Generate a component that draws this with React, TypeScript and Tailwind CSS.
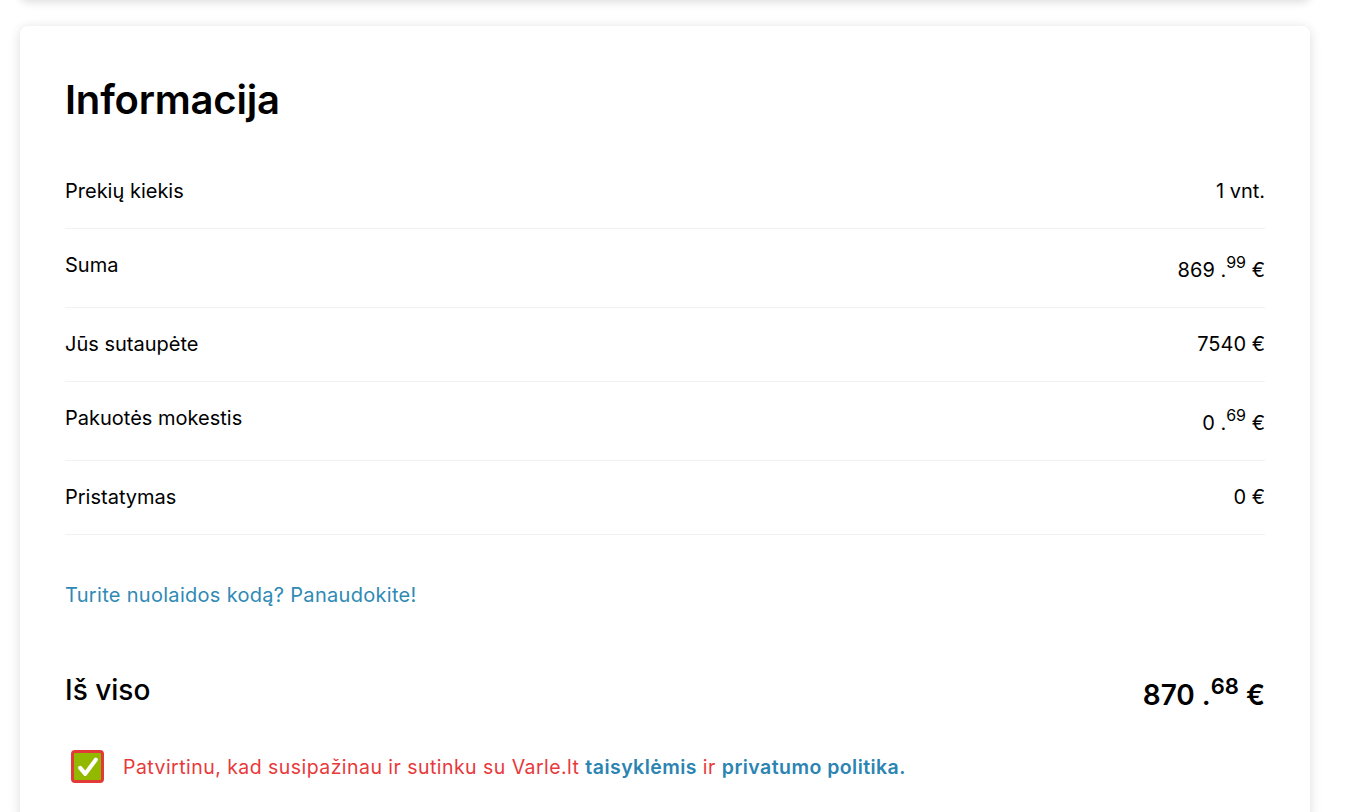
import React from "react";

const rows: { label: string; main: string; sup?: string }[] = [
  { label: "Prekių kiekis", main: "1 vnt." },
  { label: "Suma", main: "869", sup: "99" },
  { label: "Jūs sutaupėte", main: "7540" },
  { label: "Pakuotės mokestis", main: "0", sup: "69" },
  { label: "Pristatymas", main: "0" },
];

function Value({ main, sup }: { main: string; sup?: string }) {
  if (main.endsWith("vnt.")) return <span>{main}</span>;
  return (
    <span>
      {main}
      {sup ? (
        <>
          {" ."}
          <sup className="text-[16px] top-[-0.55em]">{sup}</sup>
        </>
      ) : null}{" "}
      €
    </span>
  );
}

export default function App() {
  return (
    <div
      className="min-h-screen bg-white text-black overflow-hidden"
      style={{ fontFamily: "Inter, 'Noto Sans', sans-serif" }}
    >
      <div className="ml-[20px] mr-[35px] h-[20px] -mt-[20px] rounded-b-lg bg-white shadow-[0_2px_10px_rgba(0,0,0,0.14)]" />
      <div className="ml-[20px] mr-[35px] mt-[26px] rounded-lg bg-white shadow-[0_2px_12px_rgba(0,0,0,0.14)] px-[45px] pt-[50px] pb-[40px]">
        <h1 className="text-[40px] leading-[48px] font-semibold tracking-[-0.2px]">Informacija</h1>
        <div className="mt-[31px]">
          {rows.map((r) => (
            <div
              key={r.label}
              className="flex justify-between items-start border-b border-[#f1f1f1] py-[24px] text-[20px] leading-[25px]"
            >
              <span>{r.label}</span>
              <span className={r.sup ? "pt-[5px]" : ""}>
                <Value main={r.main} sup={r.sup} />
              </span>
            </div>
          ))}
        </div>
        <div className="mt-[47px] text-[20px] tracking-[0.3px] leading-[26px] text-[#2f8ab5]">
          Turite nuolaidos kodą? Panaudokite!
        </div>
        <div className="mt-[65px] flex justify-between items-start">
          <span className="text-[28px] leading-[34px] font-medium">Iš viso</span>
          <span className="text-[28px] leading-[34px] font-semibold pt-[5px]">
            870 .<sup className="text-[22px] top-[-0.5em]">68</sup> €
          </span>
        </div>
        <div className="mt-[38px] flex items-center ml-[6px]">
          <div className="w-[33px] h-[33px] rounded-[4px] border-[3px] border-[#e23a36] bg-[#93b800] flex items-center justify-center">
            <svg width="22" height="22" viewBox="0 0 24 24">
              <path
                d="M3.5 13 L9 19.5 L20.5 4"
                fill="none"
                stroke="white"
                strokeWidth="4.5"
                strokeLinecap="round"
                strokeLinejoin="round"
              />
            </svg>
          </div>
          <p className="ml-[19px] text-[19.5px] tracking-[0.45px] leading-[24px] text-[#e8393b]">
            Patvirtinu, kad susipažinau ir sutinku su Varle.lt{" "}
            <span className="font-semibold text-[#2b84b1]">taisyklėmis</span> ir{" "}
            <span className="font-semibold text-[#2b84b1]">privatumo politika.</span>
          </p>
        </div>
      </div>
    </div>
  );
}
